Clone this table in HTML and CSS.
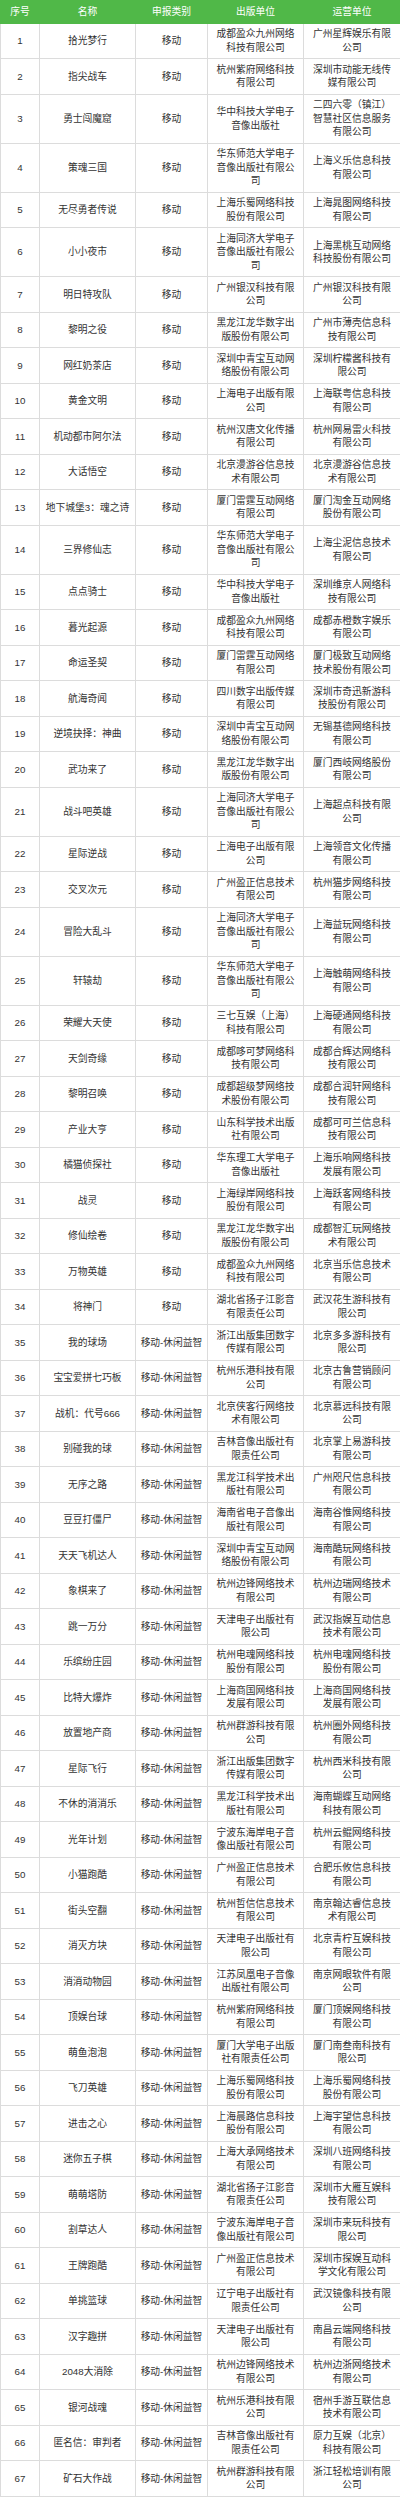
FILE: index.html
```html
<!DOCTYPE html>
<html lang="zh-CN">
<head>
<meta charset="utf-8">
<title>游戏名单</title>
<link rel="stylesheet" href="styles.css">
</head>
<body>
<table class="list">
<colgroup>
<col class="c-no"><col class="c-name"><col class="c-type"><col class="c-pub"><col class="c-op">
</colgroup>
<thead>
<tr><th>序号</th><th>名称</th><th>申报类别</th><th>出版单位</th><th>运营单位</th></tr>
</thead>
<tbody>
<tr><td>1</td><td class="nw">拾光梦行</td><td class="nw">移动</td><td>成都盈众九州网络科技有限公司</td><td>广州星辉娱乐有限公司</td></tr>
<tr><td>2</td><td class="nw">指尖战车</td><td class="nw">移动</td><td>杭州紫府网络科技有限公司</td><td>深圳市动能无线传媒有限公司</td></tr>
<tr><td>3</td><td class="nw">勇士闯魔窟</td><td class="nw">移动</td><td>华中科技大学电子音像出版社</td><td>二四六零（镇江）智慧社区信息服务有限公司</td></tr>
<tr><td>4</td><td class="nw">策魂三国</td><td class="nw">移动</td><td>华东师范大学电子音像出版社有限公司</td><td>上海义乐信息科技有限公司</td></tr>
<tr><td>5</td><td class="nw">无尽勇者传说</td><td class="nw">移动</td><td>上海乐蜀网络科技股份有限公司</td><td>上海晁图网络科技有限公司</td></tr>
<tr><td>6</td><td class="nw">小小夜市</td><td class="nw">移动</td><td>上海同济大学电子音像出版社有限公司</td><td>上海黑桃互动网络科技股份有限公司</td></tr>
<tr><td>7</td><td class="nw">明日特攻队</td><td class="nw">移动</td><td>广州银汉科技有限公司</td><td>广州银汉科技有限公司</td></tr>
<tr><td>8</td><td class="nw">黎明之役</td><td class="nw">移动</td><td>黑龙江龙华数字出版股份有限公司</td><td>广州市薄壳信息科技有限公司</td></tr>
<tr><td>9</td><td class="nw">网红奶茶店</td><td class="nw">移动</td><td>深圳中青宝互动网络股份有限公司</td><td>深圳柠檬酱科技有限公司</td></tr>
<tr><td>10</td><td class="nw">黄金文明</td><td class="nw">移动</td><td>上海电子出版有限公司</td><td>上海联粤信息科技有限公司</td></tr>
<tr><td>11</td><td class="nw">机动都市阿尔法</td><td class="nw">移动</td><td>杭州汉唐文化传播有限公司</td><td>杭州网易雷火科技有限公司</td></tr>
<tr><td>12</td><td class="nw">大话悟空</td><td class="nw">移动</td><td>北京漫游谷信息技术有限公司</td><td>北京漫游谷信息技术有限公司</td></tr>
<tr><td>13</td><td class="nw">地下城堡3：魂之诗</td><td class="nw">移动</td><td>厦门雷霆互动网络有限公司</td><td>厦门淘金互动网络股份有限公司</td></tr>
<tr><td>14</td><td class="nw">三界修仙志</td><td class="nw">移动</td><td>华东师范大学电子音像出版社有限公司</td><td>上海尘泥信息技术有限公司</td></tr>
<tr><td>15</td><td class="nw">点点骑士</td><td class="nw">移动</td><td>华中科技大学电子音像出版社</td><td>深圳维京人网络科技有限公司</td></tr>
<tr><td>16</td><td class="nw">暮光起源</td><td class="nw">移动</td><td>成都盈众九州网络科技有限公司</td><td>成都赤橙数字娱乐有限公司</td></tr>
<tr><td>17</td><td class="nw">命运圣契</td><td class="nw">移动</td><td>厦门雷霆互动网络有限公司</td><td>厦门极致互动网络技术股份有限公司</td></tr>
<tr><td>18</td><td class="nw">航海奇闻</td><td class="nw">移动</td><td>四川数字出版传媒有限公司</td><td>深圳市奇迅新游科技股份有限公司</td></tr>
<tr><td>19</td><td class="nw">逆境抉择：神曲</td><td class="nw">移动</td><td>深圳中青宝互动网络股份有限公司</td><td>无锡基德网络科技有限公司</td></tr>
<tr><td>20</td><td class="nw">武功来了</td><td class="nw">移动</td><td>黑龙江龙华数字出版股份有限公司</td><td>厦门西岐网络股份有限公司</td></tr>
<tr><td>21</td><td class="nw">战斗吧英雄</td><td class="nw">移动</td><td>上海同济大学电子音像出版社有限公司</td><td>上海超点科技有限公司</td></tr>
<tr><td>22</td><td class="nw">星际逆战</td><td class="nw">移动</td><td>上海电子出版有限公司</td><td>上海领音文化传播有限公司</td></tr>
<tr><td>23</td><td class="nw">交叉次元</td><td class="nw">移动</td><td>广州盈正信息技术有限公司</td><td>杭州猫步网络科技有限公司</td></tr>
<tr><td>24</td><td class="nw">冒险大乱斗</td><td class="nw">移动</td><td>上海同济大学电子音像出版社有限公司</td><td>上海益玩网络科技有限公司</td></tr>
<tr><td>25</td><td class="nw">轩辕劫</td><td class="nw">移动</td><td>华东师范大学电子音像出版社有限公司</td><td>上海触萌网络科技有限公司</td></tr>
<tr><td>26</td><td class="nw">荣耀大天使</td><td class="nw">移动</td><td>三七互娱（上海）科技有限公司</td><td>上海硬通网络科技有限公司</td></tr>
<tr><td>27</td><td class="nw">天剑奇缘</td><td class="nw">移动</td><td>成都哆可梦网络科技有限公司</td><td>成都合辉达网络科技有限公司</td></tr>
<tr><td>28</td><td class="nw">黎明召唤</td><td class="nw">移动</td><td>成都超级梦网络技术股份有限公司</td><td>成都合润轩网络科技有限公司</td></tr>
<tr><td>29</td><td class="nw">产业大亨</td><td class="nw">移动</td><td>山东科学技术出版社有限公司</td><td>成都可可兰信息科技有限公司</td></tr>
<tr><td>30</td><td class="nw">橘猫侦探社</td><td class="nw">移动</td><td>华东理工大学电子音像出版社</td><td>上海乐响网络科技发展有限公司</td></tr>
<tr><td>31</td><td class="nw">战灵</td><td class="nw">移动</td><td>上海绿岸网络科技股份有限公司</td><td>上海跃客网络科技有限公司</td></tr>
<tr><td>32</td><td class="nw">修仙绘卷</td><td class="nw">移动</td><td>黑龙江龙华数字出版股份有限公司</td><td>成都智汇玩网络技术有限公司</td></tr>
<tr><td>33</td><td class="nw">万物英雄</td><td class="nw">移动</td><td>成都盈众九州网络科技有限公司</td><td>北京当乐信息技术有限公司</td></tr>
<tr><td>34</td><td class="nw">将神门</td><td class="nw">移动</td><td>湖北省扬子江影音有限责任公司</td><td>武汉花生游科技有限公司</td></tr>
<tr><td>35</td><td class="nw">我的球场</td><td class="nw">移动-休闲益智</td><td>浙江出版集团数字传媒有限公司</td><td>北京多多游科技有限公司</td></tr>
<tr><td>36</td><td class="nw">宝宝爱拼七巧板</td><td class="nw">移动-休闲益智</td><td>杭州乐港科技有限公司</td><td>北京古鲁营销顾问有限公司</td></tr>
<tr><td>37</td><td class="nw">战机：代号666</td><td class="nw">移动-休闲益智</td><td>北京侠客行网络技术有限公司</td><td>北京慕远科技有限公司</td></tr>
<tr><td>38</td><td class="nw">别碰我的球</td><td class="nw">移动-休闲益智</td><td>吉林音像出版社有限责任公司</td><td>北京掌上易游科技有限公司</td></tr>
<tr><td>39</td><td class="nw">无序之路</td><td class="nw">移动-休闲益智</td><td>黑龙江科学技术出版社有限公司</td><td>广州咫尺信息科技有限公司</td></tr>
<tr><td>40</td><td class="nw">豆豆打僵尸</td><td class="nw">移动-休闲益智</td><td>海南省电子音像出版社有限公司</td><td>海南谷惟网络科技有限公司</td></tr>
<tr><td>41</td><td class="nw">天天飞机达人</td><td class="nw">移动-休闲益智</td><td>深圳中青宝互动网络股份有限公司</td><td>海南酷玩网络科技有限公司</td></tr>
<tr><td>42</td><td class="nw">象棋来了</td><td class="nw">移动-休闲益智</td><td>杭州边锋网络技术有限公司</td><td>杭州边瑞网络技术有限公司</td></tr>
<tr><td>43</td><td class="nw">跳一万分</td><td class="nw">移动-休闲益智</td><td>天津电子出版社有限公司</td><td>武汉指娱互动信息技术有限公司</td></tr>
<tr><td>44</td><td class="nw">乐缤纷庄园</td><td class="nw">移动-休闲益智</td><td>杭州电魂网络科技股份有限公司</td><td>杭州电魂网络科技股份有限公司</td></tr>
<tr><td>45</td><td class="nw">比特大爆炸</td><td class="nw">移动-休闲益智</td><td>上海商国网络科技发展有限公司</td><td>上海商国网络科技发展有限公司</td></tr>
<tr><td>46</td><td class="nw">放置地产商</td><td class="nw">移动-休闲益智</td><td>杭州群游科技有限公司</td><td>杭州圈外网络科技有限公司</td></tr>
<tr><td>47</td><td class="nw">星际飞行</td><td class="nw">移动-休闲益智</td><td>浙江出版集团数字传媒有限公司</td><td>杭州西米科技有限公司</td></tr>
<tr><td>48</td><td class="nw">不休的消消乐</td><td class="nw">移动-休闲益智</td><td>黑龙江科学技术出版社有限公司</td><td>海南蝴蝶互动网络科技有限公司</td></tr>
<tr><td>49</td><td class="nw">光年计划</td><td class="nw">移动-休闲益智</td><td>宁波东海岸电子音像出版社有限公司</td><td>杭州云鲲网络科技有限公司</td></tr>
<tr><td>50</td><td class="nw">小猫跑酷</td><td class="nw">移动-休闲益智</td><td>广州盈正信息技术有限公司</td><td>合肥乐攸信息科技有限公司</td></tr>
<tr><td>51</td><td class="nw">街头空翻</td><td class="nw">移动-休闲益智</td><td>杭州哲信信息技术有限公司</td><td>南京翰达睿信息技术有限公司</td></tr>
<tr><td>52</td><td class="nw">消灭方块</td><td class="nw">移动-休闲益智</td><td>天津电子出版社有限公司</td><td>北京青柠互娱科技有限公司</td></tr>
<tr><td>53</td><td class="nw">消消动物园</td><td class="nw">移动-休闲益智</td><td>江苏凤凰电子音像出版社有限公司</td><td>南京网眼软件有限公司</td></tr>
<tr><td>54</td><td class="nw">顶娱台球</td><td class="nw">移动-休闲益智</td><td>杭州紫府网络科技有限公司</td><td>厦门顶娱网络科技有限公司</td></tr>
<tr><td>55</td><td class="nw">萌鱼泡泡</td><td class="nw">移动-休闲益智</td><td>厦门大学电子出版社有限责任公司</td><td>厦门南叁南科技有限公司</td></tr>
<tr><td>56</td><td class="nw">飞刀英雄</td><td class="nw">移动-休闲益智</td><td>上海乐蜀网络科技股份有限公司</td><td>上海乐蜀网络科技股份有限公司</td></tr>
<tr><td>57</td><td class="nw">进击之心</td><td class="nw">移动-休闲益智</td><td>上海晨路信息科技股份有限公司</td><td>上海宇望信息科技有限公司</td></tr>
<tr><td>58</td><td class="nw">迷你五子棋</td><td class="nw">移动-休闲益智</td><td>上海大承网络技术有限公司</td><td>深圳八班网络科技有限公司</td></tr>
<tr><td>59</td><td class="nw">萌萌塔防</td><td class="nw">移动-休闲益智</td><td>湖北省扬子江影音有限责任公司</td><td>深圳市大雁互娱科技有限公司</td></tr>
<tr><td>60</td><td class="nw">割草达人</td><td class="nw">移动-休闲益智</td><td>宁波东海岸电子音像出版社有限公司</td><td>深圳市来玩科技有限公司</td></tr>
<tr><td>61</td><td class="nw">王牌跑酷</td><td class="nw">移动-休闲益智</td><td>广州盈正信息技术有限公司</td><td>深圳市探娱互动科学文化有限公司</td></tr>
<tr><td>62</td><td class="nw">单挑篮球</td><td class="nw">移动-休闲益智</td><td>辽宁电子出版社有限责任公司</td><td>武汉镜像科技有限公司</td></tr>
<tr><td>63</td><td class="nw">汉字趣拼</td><td class="nw">移动-休闲益智</td><td>天津电子出版社有限公司</td><td>南昌云端网络科技有限公司</td></tr>
<tr><td>64</td><td class="nw">2048大消除</td><td class="nw">移动-休闲益智</td><td>杭州边锋网络技术有限公司</td><td>杭州边浙网络技术有限公司</td></tr>
<tr><td>65</td><td class="nw">银河战魂</td><td class="nw">移动-休闲益智</td><td>杭州乐港科技有限公司</td><td>宿州手游互联信息技术有限公司</td></tr>
<tr><td>66</td><td class="nw">匿名信：审判者</td><td class="nw">移动-休闲益智</td><td>吉林音像出版社有限责任公司</td><td>原力互娱（北京）科技有限公司</td></tr>
<tr><td>67</td><td class="nw">矿石大作战</td><td class="nw">移动-休闲益智</td><td>杭州群游科技有限公司</td><td>浙江轻松培训有限公司</td></tr>
</tbody>
</table>
</body>
</html>
```

FILE: styles.css
```css
html, body {
  margin: 0;
  padding: 0;
  background: #ffffff;
}

.list {
  width: 400px;
  table-layout: fixed;
  border-collapse: collapse;
  font-family: "Liberation Sans", "Noto Sans CJK SC", sans-serif;
  font-size: 9.75px;
  line-height: 13.5px;
  color: #333333;
}

.c-no { width: 39px; }
.c-name { width: 96px; }
.c-type { width: 72px; }
.c-pub { width: 96px; }
.c-op { width: 97px; }

.list th {
  background: #50b848;
  color: #ffffff;
  font-weight: normal;
  text-align: center;
  vertical-align: middle;
  padding: 4px 2px;
  border: 1px solid #50b848;
}

.list td {
  text-align: center;
  vertical-align: middle;
  padding: 3.75px 6px;
  border: 1px solid #dcdcdc;
  word-break: break-all;
}

.list td.nw {
  white-space: nowrap;
  padding-left: 2px;
  padding-right: 2px;
}
```
